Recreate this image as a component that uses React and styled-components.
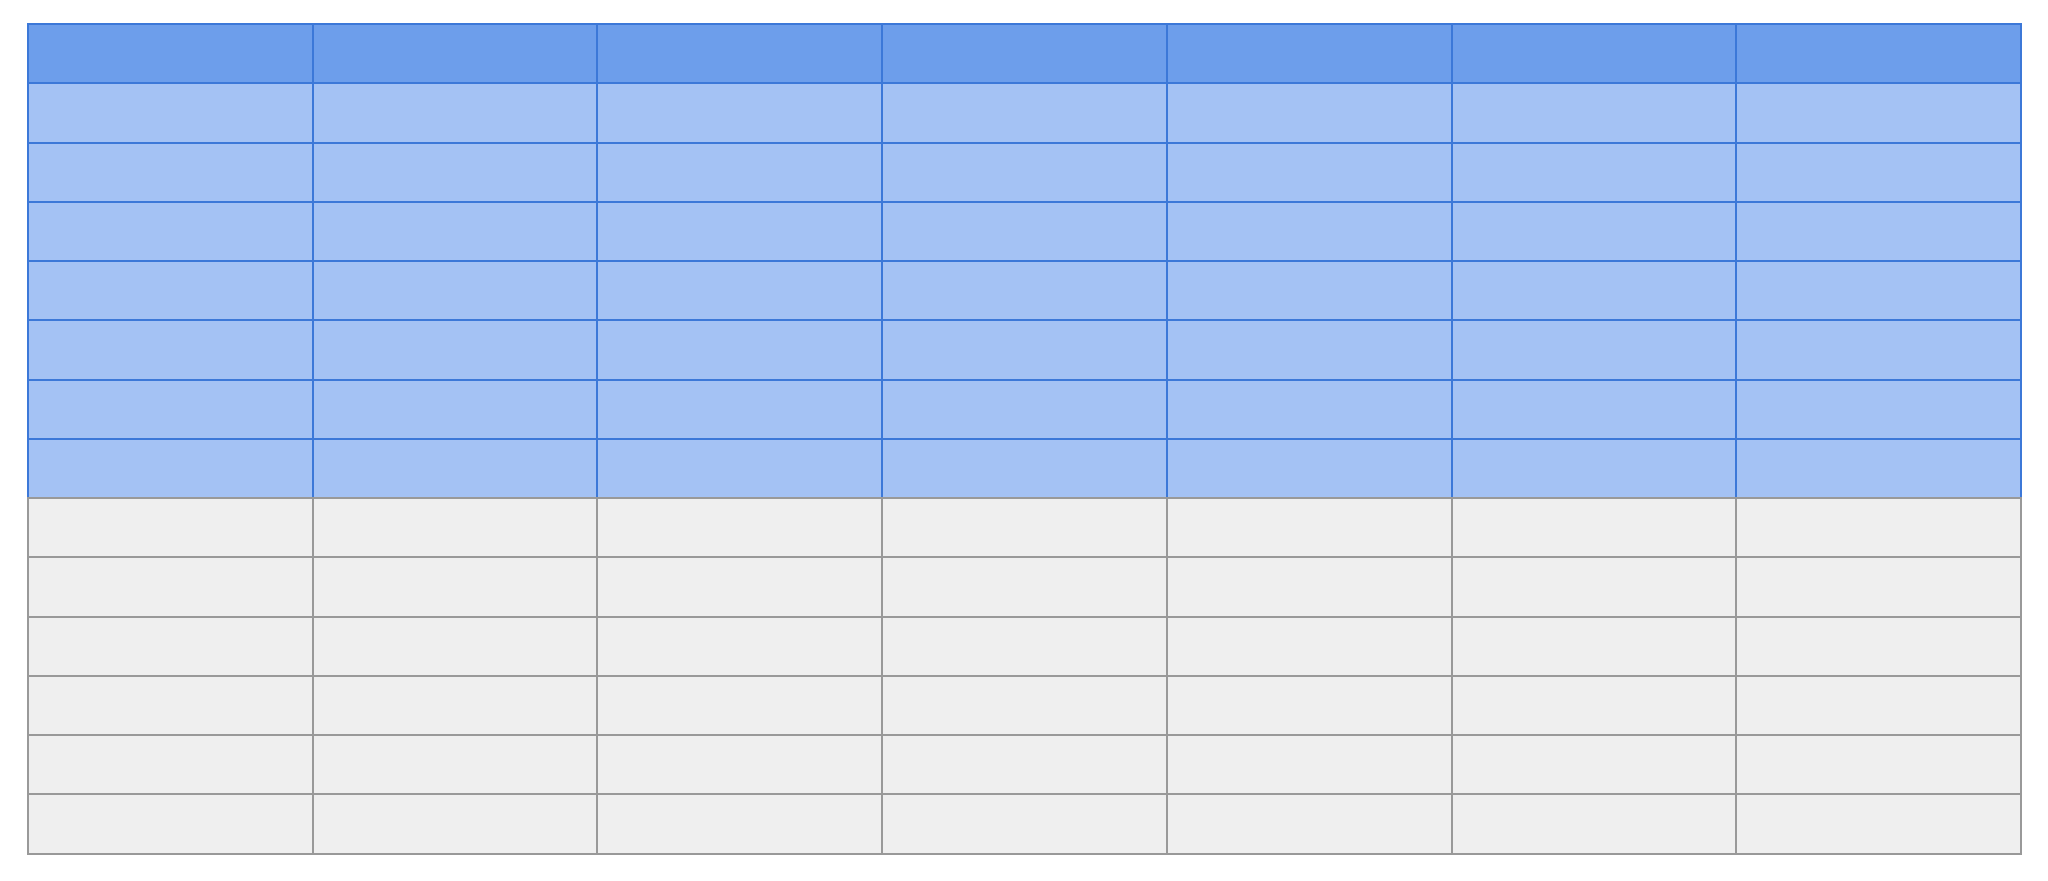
import styled, { createGlobalStyle } from 'styled-components';

const COLUMNS = 7;
const BLUE_ROWS = 7;
const GREY_ROWS = 6;

export default function App() {
  const cells = (count) => Array.from({ length: count * COLUMNS }, (_, i) => i);

  return (
    <>
      <GlobalStyle />
      <Sheet>
        <BlueSection>
          {cells(1).map(i => <Cell key={`h${i}`} $tone="header" />)}
          {cells(BLUE_ROWS).map(i => <Cell key={`b${i}`} $tone="blue" />)}
        </BlueSection>
        <GreySection>
          {cells(GREY_ROWS).map(i => <Cell key={`g${i}`} $tone="grey" />)}
        </GreySection>
      </Sheet>
    </>
  );
}

const GlobalStyle = createGlobalStyle`
  body {
    margin: 0;
    background: #ffffff;
    font-family: Roboto, "Liberation Sans", sans-serif;
  }
`;

const tones = {
  header: '#6d9eeb',
  blue: '#a4c2f4',
  grey: '#efefef',
};

const Sheet = styled.div`
  width: 1995px;
  margin: 23px 0 0 27px;
  display: flex;
  flex-direction: column;
`;

const BlueSection = styled.div`
  display: grid;
  grid-template-columns: repeat(7, 1fr);
  grid-auto-rows: 57.25px;
  gap: 2px;
  padding: 2px 2px 0 2px;
  background: #3c78d8;
`;

const GreySection = styled.div`
  display: grid;
  grid-template-columns: repeat(7, 1fr);
  grid-auto-rows: 57.25px;
  gap: 2px;
  padding: 2px;
  background: #999999;
`;

const Cell = styled.div`
  background: ${p => tones[p.$tone]};
`;
